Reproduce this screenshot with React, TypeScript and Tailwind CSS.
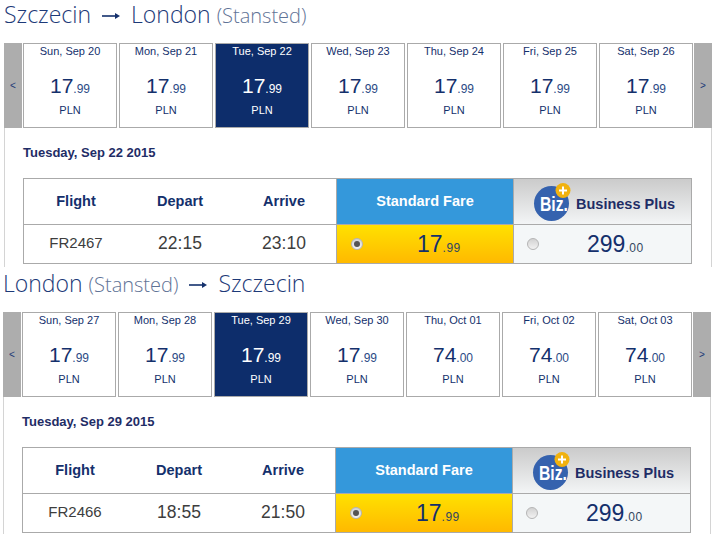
const sans = { fontFamily: '"Liberation Sans", Arial, sans-serif' }

type Day = { label: string; whole: string; cents: string; active?: boolean }

function Title({ children }: { children: React.ReactNode }) {
  return (
    <div className="h-[43px] whitespace-nowrap text-[23px] leading-[28px] text-[#1d3a78] font-light" style={{ fontFamily: '"Open Sans", sans-serif' }}>
      {children}
    </div>
  )
}

function Arrow() {
  return (
    <svg width="18" height="8" viewBox="0 0 18 8" className="mx-[11px] inline-block align-[3px]">
      <path d="M0 4h15" stroke="#14306c" strokeWidth="1.6" />
      <path d="M13 1l5 3-5 3z" fill="#14306c" />
    </svg>
  )
}

function NavButton({ label }: { label: string }) {
  return (
    <div className="flex w-[18px] items-center justify-center bg-[#adadad] text-[10px] text-[#1d3a78]">{label}</div>
  )
}

function DayCard({ day }: { day: Day }) {
  return (
    <div className={`flex h-[85px] w-[94px] flex-col items-center border border-[#aaaaaa] ${day.active ? 'bg-[#0d2d6b] text-white' : 'bg-white text-[#14306c]'}`}>
      <div className="text-[11px] leading-[14px]">{day.label}</div>
      <div className="mt-[14px] flex h-[28px] items-baseline">
        <span className="text-[21px] leading-[28px]">{day.whole}</span>
        <span className={`text-[12px] ${day.active ? 'text-white' : 'text-[#2b4a85]'}`}>{day.cents}</span>
      </div>
      <div className="mt-[3px] text-[11px] leading-[14px]">PLN</div>
    </div>
  )
}

function Radio({ checked }: { checked?: boolean }) {
  return (
    <span className="flex h-[12px] w-[12px] shrink-0 items-center justify-center rounded-full border border-[#b5b5b5] bg-gradient-to-b from-[#d2d2d2] to-[#f2f2f2]">
      {checked && <span className="h-[6px] w-[6px] rounded-full bg-[#555555]" />}
    </span>
  )
}

function BizLogo() {
  return (
    <svg width="38" height="38" viewBox="0 0 38 38" className="shrink-0 overflow-visible">
      <circle cx="17.5" cy="20.5" r="17.5" fill="#3562ae" />
      <text x="6" y="28" fontSize="21" fontWeight="700" fill="#fff" textLength="28" lengthAdjust="spacingAndGlyphs" style={sans}>Biz.</text>
      <circle cx="29" cy="7.5" r="7.5" fill="#f1b20f" />
      <path d="M25 7.5h8M29 3.5v8" stroke="#fff" strokeWidth="2" />
    </svg>
  )
}

function Price({ whole, cents }: { whole: string; cents: string }) {
  return (
    <div className="flex items-baseline text-[#14306c]">
      <span className="text-[23px] leading-[28px]">{whole}</span>
      <span className="text-[12px] tracking-[0.5px] text-[#33475f]">{cents}</span>
    </div>
  )
}

function FareTable({ flight, depart, arrive }: { flight: string; depart: string; arrive: string }) {
  return (
    <div className="flex h-[86px] w-[669px] flex-col border border-[#aaaaaa]">
      <div className="flex h-[46px] border-b border-[#aaaaaa]">
        <div className="grid w-[312px] grid-cols-3 items-center text-center text-[14.5px] font-bold text-[#14306c]">
          <div>Flight</div>
          <div>Depart</div>
          <div>Arrive</div>
        </div>
        <div className="flex w-[177px] items-center justify-center border-l border-[#aaaaaa] bg-[#3498db] text-[14.5px] font-bold text-white">
          Standard Fare
        </div>
        <div className="flex flex-1 items-center gap-[4px] border-l border-[#aaaaaa] bg-gradient-to-b from-[#cbcbcb] to-[#f3f5f6] pl-[20px] text-[14.5px] font-bold text-[#1f2d66]">
          <BizLogo />
          <span className="mt-[6px]">Business Plus</span>
        </div>
      </div>
      <div className="flex flex-1">
        <div className="grid w-[312px] grid-cols-3 items-center pb-[1px] text-center text-[#3d3d3d]">
          <div className="text-[15px]">{flight}</div>
          <div className="text-[17.5px]">{depart}</div>
          <div className="text-[17.5px]">{arrive}</div>
        </div>
        <div className="flex w-[177px] items-center border-l border-[#aaaaaa] bg-gradient-to-b from-[#ffe100] to-[#ffb900] pl-[14px]">
          <Radio checked />
          <div className="ml-[54px]"><Price whole="17" cents=".99" /></div>
        </div>
        <div className="flex flex-1 items-center border-l border-[#aaaaaa] bg-[#f4f7f8] pl-[13px]">
          <Radio />
          <div className="ml-[48px]"><Price whole="299" cents=".00" /></div>
        </div>
      </div>
    </div>
  )
}

function Section({ title, days, heading, flight, depart, arrive, shift }: {
  title: React.ReactNode
  days: Day[]
  heading: string
  flight: string
  depart: string
  arrive: string
  shift: string
}) {
  return (
    <section className={`${shift} w-[708px]`}>
      <Title>{title}</Title>
      <div className="flex h-[85px]">
        <NavButton label="<" />
        <div className="ml-[1px] flex gap-[2px]">
          {days.map((d) => <DayCard key={d.label} day={d} />)}
        </div>
        <div className="ml-[1px]"><div className="flex h-full"><NavButton label=">" /></div></div>
      </div>
      <div className="h-[139px] border-x border-[#d4d4d4] pl-[18px]">
        <div className="flex h-[50px] items-center pb-[1px] text-[13px] font-bold text-[#1f2d66]">{heading}</div>
        <FareTable flight={flight} depart={depart} arrive={arrive} />
      </div>
    </section>
  )
}

const firstDays: Day[] = [
  { label: 'Sun, Sep 20', whole: '17', cents: '.99' },
  { label: 'Mon, Sep 21', whole: '17', cents: '.99' },
  { label: 'Tue, Sep 22', whole: '17', cents: '.99', active: true },
  { label: 'Wed, Sep 23', whole: '17', cents: '.99' },
  { label: 'Thu, Sep 24', whole: '17', cents: '.99' },
  { label: 'Fri, Sep 25', whole: '17', cents: '.99' },
  { label: 'Sat, Sep 26', whole: '17', cents: '.99' },
]

const secondDays: Day[] = [
  { label: 'Sun, Sep 27', whole: '17', cents: '.99' },
  { label: 'Mon, Sep 28', whole: '17', cents: '.99' },
  { label: 'Tue, Sep 29', whole: '17', cents: '.99', active: true },
  { label: 'Wed, Sep 30', whole: '17', cents: '.99' },
  { label: 'Thu, Oct 01', whole: '74', cents: '.00' },
  { label: 'Fri, Oct 02', whole: '74', cents: '.00' },
  { label: 'Sat, Oct 03', whole: '74', cents: '.00' },
]

const muted = 'text-[20px] text-[#5f7396]'

export default function App() {
  return (
    <div className="h-[534px] w-[717px] overflow-hidden bg-white" style={sans}>
      <Section
        shift="ml-[4px]"
        title={<>Szczecin<Arrow />London <span className={muted}>(Stansted)</span></>}
        days={firstDays}
        heading="Tuesday, Sep 22 2015"
        flight="FR2467"
        depart="22:15"
        arrive="23:10"
      />
      <div className="h-[2px]" />
      <Section
        shift="ml-[3px]"
        title={<>London <span className={muted}>(Stansted)</span><Arrow />Szczecin</>}
        days={secondDays}
        heading="Tuesday, Sep 29 2015"
        flight="FR2466"
        depart="18:55"
        arrive="21:50"
      />
    </div>
  )
}
